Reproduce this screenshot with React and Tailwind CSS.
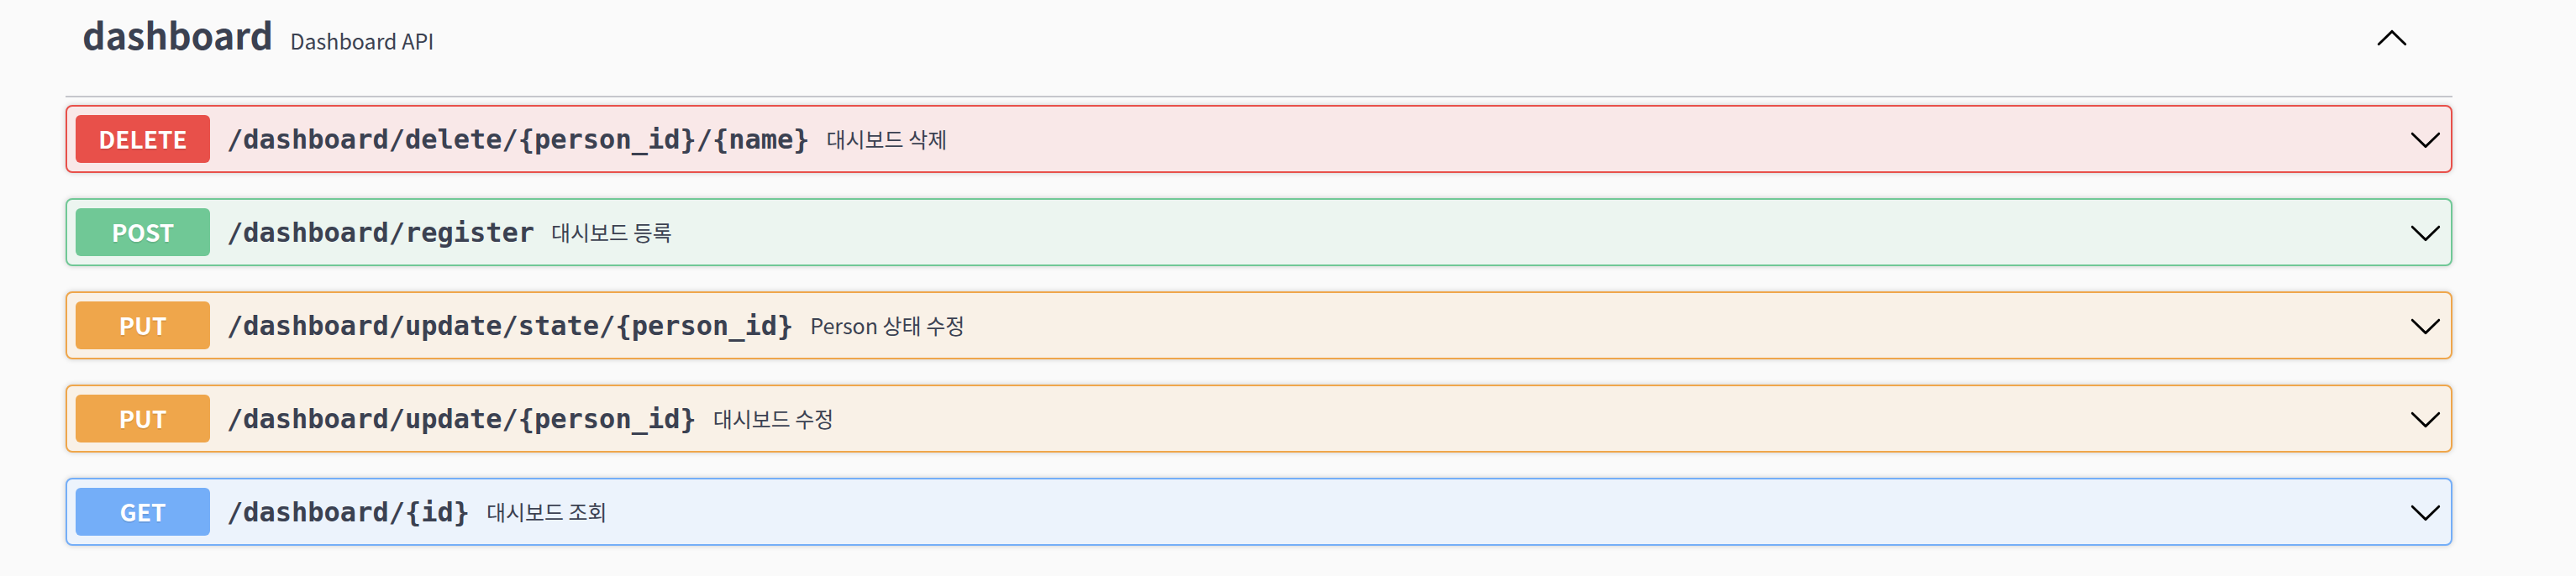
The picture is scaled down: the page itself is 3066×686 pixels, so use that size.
import React from "react";

const ops = [
  {
    method: "DELETE",
    path: "/dashboard/delete/{person_id}/{name}",
    desc: "대시보드 삭제",
    badge: "bg-[#e8504a]",
    box: "border-[#e8504a] bg-[#f9e8e8]",
  },
  {
    method: "POST",
    path: "/dashboard/register",
    desc: "대시보드 등록",
    badge: "bg-[#70c896]",
    box: "border-[#70c896] bg-[#ecf5f0]",
  },
  {
    method: "PUT",
    path: "/dashboard/update/state/{person_id}",
    desc: "Person 상태 수정",
    badge: "bg-[#efa64b]",
    box: "border-[#efa64b] bg-[#f9f1e7]",
  },
  {
    method: "PUT",
    path: "/dashboard/update/{person_id}",
    desc: "대시보드 수정",
    badge: "bg-[#efa64b]",
    box: "border-[#efa64b] bg-[#f9f1e7]",
  },
  {
    method: "GET",
    path: "/dashboard/{id}",
    desc: "대시보드 조회",
    badge: "bg-[#74aef8]",
    box: "border-[#74aef8] bg-[#ecf3fc]",
  },
];

const Arrow = ({ up }) => (
  <svg
    width="40"
    height="40"
    viewBox="0 0 20 20"
    className={up ? "rotate-180" : ""}
    aria-hidden="true"
  >
    <path
      fill="#000"
      d="M17.418 6.109c.272-.268.709-.268.979 0s.271.701 0 .969l-7.908 7.83c-.27.268-.707.268-.979 0l-7.908-7.83c-.27-.268-.27-.701 0-.969.271-.268.709-.268.979 0L10 13.25l7.418-7.141z"
    />
  </svg>
);

const App = () => {
  return (
    <div className="min-h-[686px] bg-[#fafafa] pl-[78px] pr-[147px] font-['Noto_Sans_CJK_KR',sans-serif] text-[#3b4151]">
      <div className="mb-[9px] flex h-[116px] items-start border-b-2 border-[#c5c6cc] pl-[20px] pr-[52px] pt-[8px]">
        <div className="flex flex-1 items-baseline">
          <span className="text-[43px] font-bold">dashboard</span>
          <span className="pl-[20px] text-[25px]">Dashboard API</span>
        </div>
        <div className="mt-[18px]">
          <Arrow up />
        </div>
      </div>

      {ops.map((op, i) => (
        <div
          key={i}
          className={`mb-[30px] flex items-center rounded-[8px] border-2 p-[10px] shadow-[0_0_6px_rgba(0,0,0,0.19)] ${op.box}`}
        >
          <div
            className={`flex h-[57px] w-[160px] items-center justify-center rounded-[6px] pb-[2px] text-[28px] font-bold text-white [text-shadow:0_2px_0_rgba(0,0,0,0.1)] ${op.badge}`}
          >
            {op.method}
          </div>
          <span className="px-[20px] font-['DejaVu_Sans_Mono',monospace] text-[32px] font-bold">
            {op.path}
          </span>
          <span className="flex-1 text-[25px]">{op.desc}</span>
          <Arrow />
        </div>
      ))}
    </div>
  );
};

export default App;
